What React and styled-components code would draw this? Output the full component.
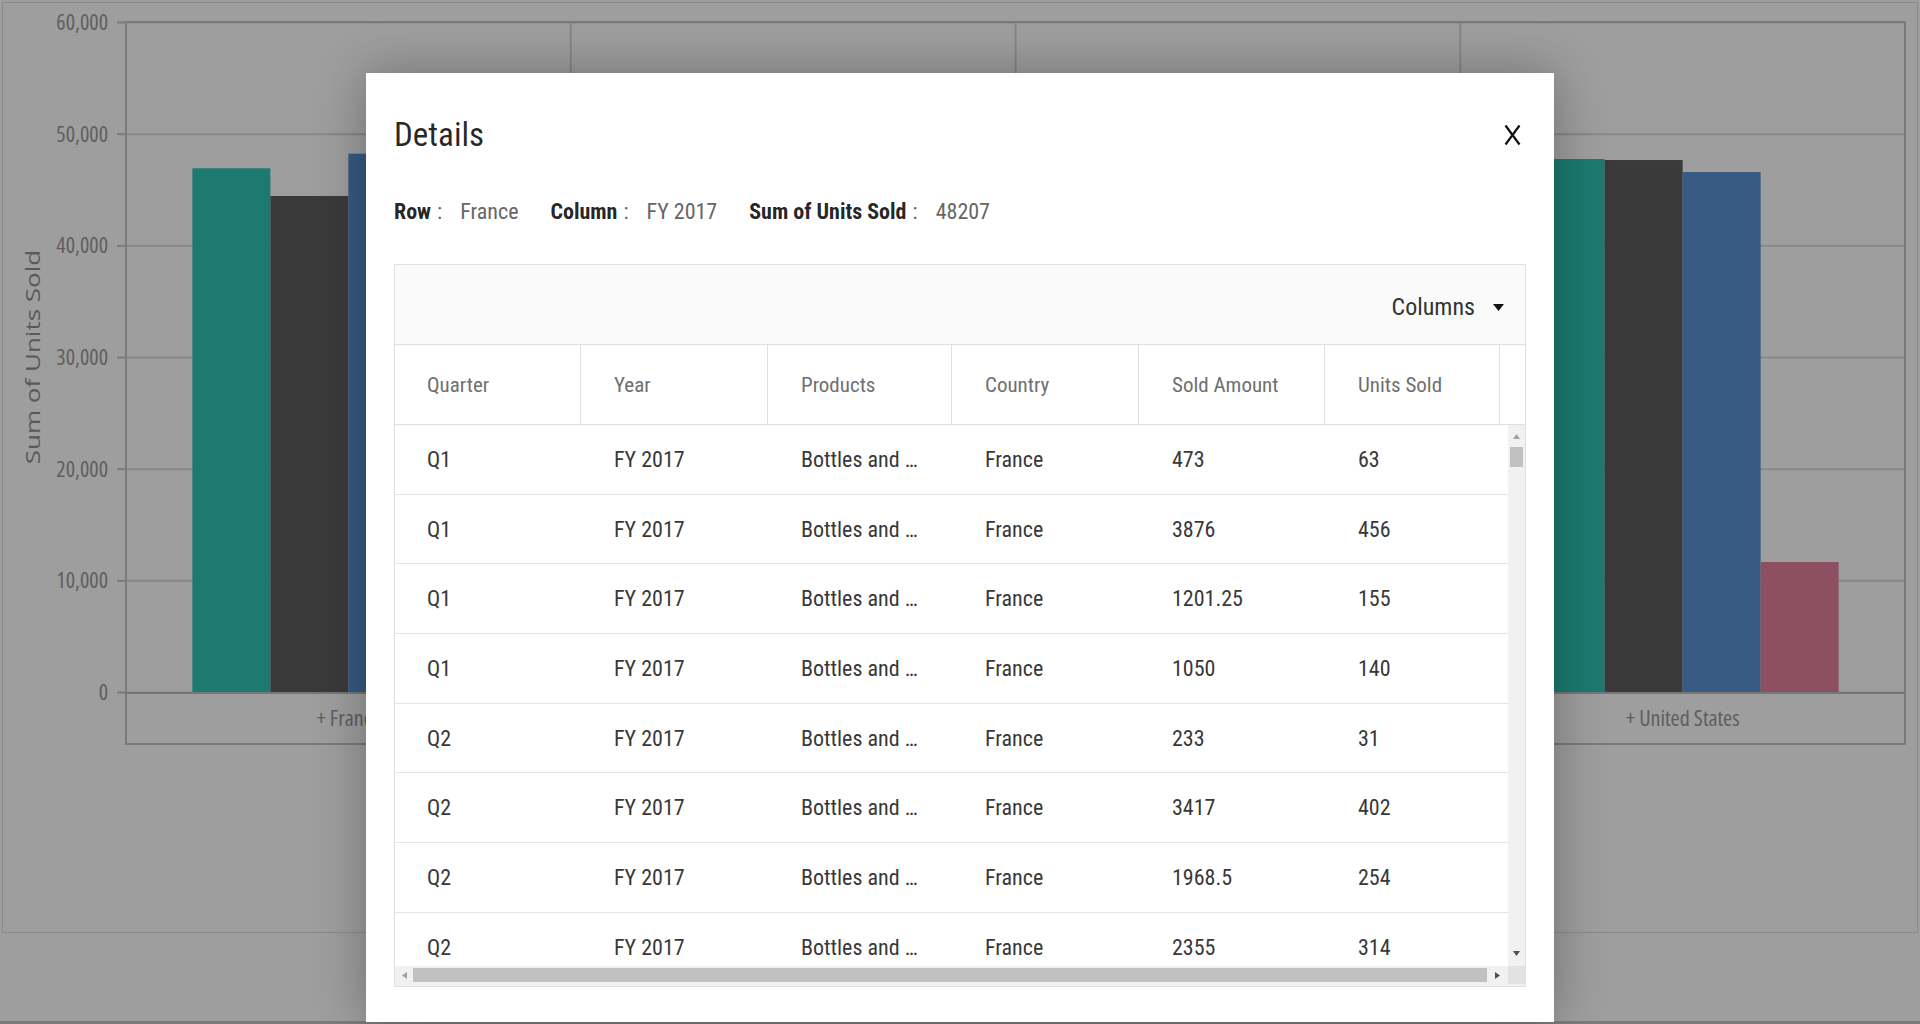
import React from 'react';
import styled, { createGlobalStyle } from 'styled-components';

const GlobalStyle = createGlobalStyle`
  html, body {
    margin: 0;
    padding: 0;
    font-family: Roboto, "Liberation Sans", sans-serif;
    font-stretch: 82%;
  }
  * { box-sizing: border-box; }
`;

// ---------- chart (background) ----------

const PLOT_LEFT = 126;
const PLOT_RIGHT = 1905;
const PLOT_TOP = 22;
const PLOT_BOTTOM = 692;
const MAX = 60000;
const CAT_W = (PLOT_RIGHT - PLOT_LEFT) / 4;
const BAR_W = 78;

const yOf = (v) => PLOT_BOTTOM - (v * (PLOT_BOTTOM - PLOT_TOP)) / MAX;

const ticks = [0, 10000, 20000, 30000, 40000, 50000, 60000];
const barColors = ['#1c7a70', '#3a3a3a', '#365a82', '#8d5063'];

// middle categories sit fully behind the dialog, so only their bars are drawn
const categories = [
  { label: '+ France', values: [46900, 44420, 48207, 12100] },
  { label: '', values: [45800, 43900, 47100, 11800] },
  { label: '', values: [46200, 44100, 47300, 11900] },
  { label: '+ United States', values: [47730, 47640, 46560, 11640] },
];

const Page = styled.div`
  position: relative;
  width: 1920px;
  height: 1024px;
  overflow: hidden;
  background: #9e9e9e;
`;

const ChartSvg = styled.svg`
  display: block;
`;

const AxisText = styled.text`
  font-family: "Open Sans", "Liberation Sans", sans-serif;
  font-stretch: 78%;
  font-size: 22px;
  fill: #5e5e5e;
`;

const AxisTitle = styled(AxisText)`
  font-stretch: 100%;
  font-size: 26px;
  fill: #595959;
`;

const Chart = () => (
  <ChartSvg width="1920" height="1024" viewBox="0 0 1920 1024">
    <rect x="2.5" y="2.5" width="1915" height="930" fill="none" stroke="#8a8a8a" />
    {ticks.map((t) => (
      <g key={t}>
        <line x1={PLOT_LEFT} x2={PLOT_RIGHT} y1={yOf(t) + 0.5} y2={yOf(t) + 0.5} stroke="#878787" strokeWidth="2" />
        <line x1={117} x2={PLOT_LEFT} y1={yOf(t) + 0.5} y2={yOf(t) + 0.5} stroke="#7a7a7a" strokeWidth="2" />
        <AxisText x="108" y={yOf(t) + 8} textAnchor="end">
          {t.toLocaleString('en-US')}
        </AxisText>
      </g>
    ))}
    {[1, 2, 3].map((i) => (
      <line
        key={i}
        x1={PLOT_LEFT + CAT_W * i}
        x2={PLOT_LEFT + CAT_W * i}
        y1={PLOT_TOP}
        y2={744}
        stroke="#878787"
        strokeWidth="2"
      />
    ))}
    <rect x={PLOT_LEFT} y={PLOT_TOP} width={PLOT_RIGHT - PLOT_LEFT} height={744 - PLOT_TOP} fill="none" stroke="#7a7a7a" strokeWidth="2" />
    {categories.map((c, i) => {
      const center = PLOT_LEFT + CAT_W * (i + 0.5);
      return (
        <g key={i}>
          {c.values.map((v, j) => (
            <rect
              key={j}
              x={center - 2 * BAR_W + j * BAR_W}
              y={yOf(v)}
              width={BAR_W}
              height={PLOT_BOTTOM - yOf(v)}
              fill={barColors[j]}
            />
          ))}
          {c.label && (
            <AxisText x={center} y={726} textAnchor="middle" fontSize="22">
              {c.label}
            </AxisText>
          )}
        </g>
      );
    })}
    <line x1={PLOT_LEFT} x2={PLOT_RIGHT} y1={PLOT_BOTTOM + 1} y2={PLOT_BOTTOM + 1} stroke="#767676" strokeWidth="2" />
    <AxisTitle transform="translate(40 357) rotate(-90) scale(1 0.8)" textAnchor="middle">
      Sum of Units Sold
    </AxisTitle>
    <rect x="0" y="1021" width="1920" height="3" fill="#7c7c7c" />
  </ChartSvg>
);

// ---------- dialog ----------

const Dialog = styled.div`
  position: absolute;
  left: 366px;
  top: 73px;
  width: 1188px;
  height: 949px;
  padding: 42px 28px 35px;
  display: flex;
  flex-direction: column;
  background: #fff;
  box-shadow: 0 0 48px rgba(0, 0, 0, 0.3);
`;

const DialogHeader = styled.div`
  display: flex;
  align-items: center;
  justify-content: space-between;
  height: 40px;
`;

const Title = styled.h2`
  margin: 0;
  font-size: 33px;
  line-height: 40px;
  font-weight: 400;
  font-stretch: 75%;
  color: rgba(0, 0, 0, 0.85);
`;

const CloseButton = styled.button`
  display: flex;
  padding: 0;
  margin-right: 5px;
  border: 0;
  background: none;
  cursor: pointer;
`;

const InfoRow = styled.div`
  display: flex;
  align-items: center;
  height: 30px;
  margin-top: 41px;
  font-size: 22px;
`;

const InfoItem = styled.div`
  display: flex;
  align-items: baseline;
  margin-right: 32px;
`;

const InfoLabel = styled.span`
  font-weight: 700;
  color: rgba(0, 0, 0, 0.87);
`;

const InfoColon = styled.span`
  margin-left: 6px;
  color: #666;
`;

const InfoValue = styled.span`
  margin-left: 18px;
  color: #666;
`;

const Grid = styled.div`
  flex: 1;
  margin-top: 38px;
  display: flex;
  flex-direction: column;
  border: 1px solid #e0e0e0;
  overflow: hidden;
`;

const Toolbar = styled.div`
  height: 80px;
  display: flex;
  align-items: center;
  justify-content: flex-end;
  padding: 5px 21px 0 0;
  background: #fafafa;
  border-bottom: 1px solid #e0e0e0;
`;

const ColumnsButton = styled.button`
  display: flex;
  align-items: center;
  gap: 18px;
  padding: 0;
  border: 0;
  background: none;
  font-family: inherit;
  font-stretch: inherit;
  font-size: 24px;
  color: #333;
  cursor: pointer;
`;

const HEAD_COLS = '185px 187px 184px 187px 186px 175px 1fr';
const BODY_COLS = '185px 187px 184px 187px 186px 1fr';

const HeaderRow = styled.div`
  display: grid;
  grid-template-columns: ${HEAD_COLS};
  height: 80px;
  border-bottom: 1px solid #e0e0e0;
`;

const HeaderCell = styled.div`
  display: flex;
  align-items: center;
  padding-left: 33px;
  padding-top: 1px;
  border-left: 1px solid #e0e0e0;
  font-size: 21px;
  font-weight: 400;
  color: #6f6f6f;
  &:first-child {
    padding-left: 32px;
    border-left: 0;
  }
`;

const BodyWrap = styled.div`
  flex: 1;
  display: flex;
  min-height: 0;
`;

const Rows = styled.div`
  flex: 1;
  overflow: hidden;
`;

const Row = styled.div`
  display: grid;
  grid-template-columns: ${BODY_COLS};
  height: 69.7px;
  border-bottom: 1px solid #e4e4e4;
`;

const Cell = styled.div`
  display: flex;
  align-items: center;
  padding-left: 34px;
  font-size: 22px;
  color: #383838;
  white-space: nowrap;
  overflow: hidden;
  &:first-child {
    padding-left: 32px;
  }
`;

const VScroll = styled.div`
  width: 17px;
  display: flex;
  flex-direction: column;
  align-items: center;
  background: #f1f1f1;
`;

const ArrowBox = styled.div`
  display: flex;
  align-items: center;
  justify-content: center;
  width: ${(p) => p.$w || '100%'};
  height: ${(p) => p.$h || '100%'};
  flex-shrink: 0;
`;

const VThumb = styled.div`
  width: 13px;
  height: 20px;
  background: #c1c1c1;
  flex-shrink: 0;
`;

const Spacer = styled.div`
  flex: 1;
`;

const HScroll = styled.div`
  height: 20px;
  display: flex;
  background: #f1f1f1;
`;

const HTrack = styled.div`
  flex: 1;
  display: flex;
  align-items: flex-start;
  padding-top: 2px;
`;

const HThumb = styled.div`
  flex: 1;
  height: 14px;
  background: #c1c1c1;
`;

const Corner = styled.div`
  width: 17px;
  height: 18px;
  background: #e2e2e2;
`;

const arrowPaths = {
  up: 'M0 5 L3.5 0 L7 5 Z',
  down: 'M0 0 L7 0 L3.5 5 Z',
  left: 'M5 0 L5 7 L0 3.5 Z',
  right: 'M0 0 L5 3.5 L0 7 Z',
};

const ScrollArrow = ({ dir, dark }) => {
  const vertical = dir === 'up' || dir === 'down';
  return (
    <svg width={vertical ? 7 : 5} height={vertical ? 5 : 7} viewBox={vertical ? '0 0 7 5' : '0 0 5 7'}>
      <path d={arrowPaths[dir]} fill={dark ? '#505050' : '#a3a3a3'} />
    </svg>
  );
};

const columns = ['Quarter', 'Year', 'Products', 'Country', 'Sold Amount', 'Units Sold'];

const rows = [
  ['Q1', 473, 63],
  ['Q1', 3876, 456],
  ['Q1', 1201.25, 155],
  ['Q1', 1050, 140],
  ['Q2', 233, 31],
  ['Q2', 3417, 402],
  ['Q2', 1968.5, 254],
  ['Q2', 2355, 314],
];

const CloseIcon = () => (
  <svg width="17" height="22" viewBox="0 0 17 22">
    <path d="M1.5 1.5 L15.5 20.5 M15.5 1.5 L1.5 20.5" stroke="#111" strokeWidth="2.2" fill="none" />
  </svg>
);

const CaretIcon = () => (
  <svg width="11" height="7" viewBox="0 0 11 7">
    <path d="M0 0 H11 L5.5 7 Z" fill="#111" />
  </svg>
);

const info = [
  ['Row', 'France'],
  ['Column', 'FY 2017'],
  ['Sum of Units Sold', '48207'],
];

export default function App() {
  return (
    <>
      <GlobalStyle />
      <Page>
        <Chart />
        <Dialog>
          <DialogHeader>
            <Title>Details</Title>
            <CloseButton aria-label="Close">
              <CloseIcon />
            </CloseButton>
          </DialogHeader>
          <InfoRow>
            {info.map(([label, value]) => (
              <InfoItem key={label}>
                <InfoLabel>{label}</InfoLabel>
                <InfoColon>:</InfoColon>
                <InfoValue>{value}</InfoValue>
              </InfoItem>
            ))}
          </InfoRow>
          <Grid>
            <Toolbar>
              <ColumnsButton>
                Columns
                <CaretIcon />
              </ColumnsButton>
            </Toolbar>
            <HeaderRow>
              {columns.map((c) => (
                <HeaderCell key={c}>{c}</HeaderCell>
              ))}
              <HeaderCell />
            </HeaderRow>
            <BodyWrap>
              <Rows>
                {rows.map(([q, amount, units], i) => (
                  <Row key={i}>
                    <Cell>{q}</Cell>
                    <Cell>FY 2017</Cell>
                    <Cell>Bottles and …</Cell>
                    <Cell>France</Cell>
                    <Cell>{amount}</Cell>
                    <Cell>{units}</Cell>
                  </Row>
                ))}
              </Rows>
              <VScroll>
                <ArrowBox $h="22px">
                  <ScrollArrow dir="up" />
                </ArrowBox>
                <VThumb />
                <Spacer />
                <ArrowBox $h="26px">
                  <ScrollArrow dir="down" dark />
                </ArrowBox>
              </VScroll>
            </BodyWrap>
            <HScroll>
              <HTrack>
                <ArrowBox $w="18px" $h="14px">
                  <ScrollArrow dir="left" />
                </ArrowBox>
                <HThumb />
                <ArrowBox $w="21px" $h="14px">
                  <ScrollArrow dir="right" dark />
                </ArrowBox>
              </HTrack>
              <Corner />
            </HScroll>
          </Grid>
        </Dialog>
      </Page>
    </>
  );
}
